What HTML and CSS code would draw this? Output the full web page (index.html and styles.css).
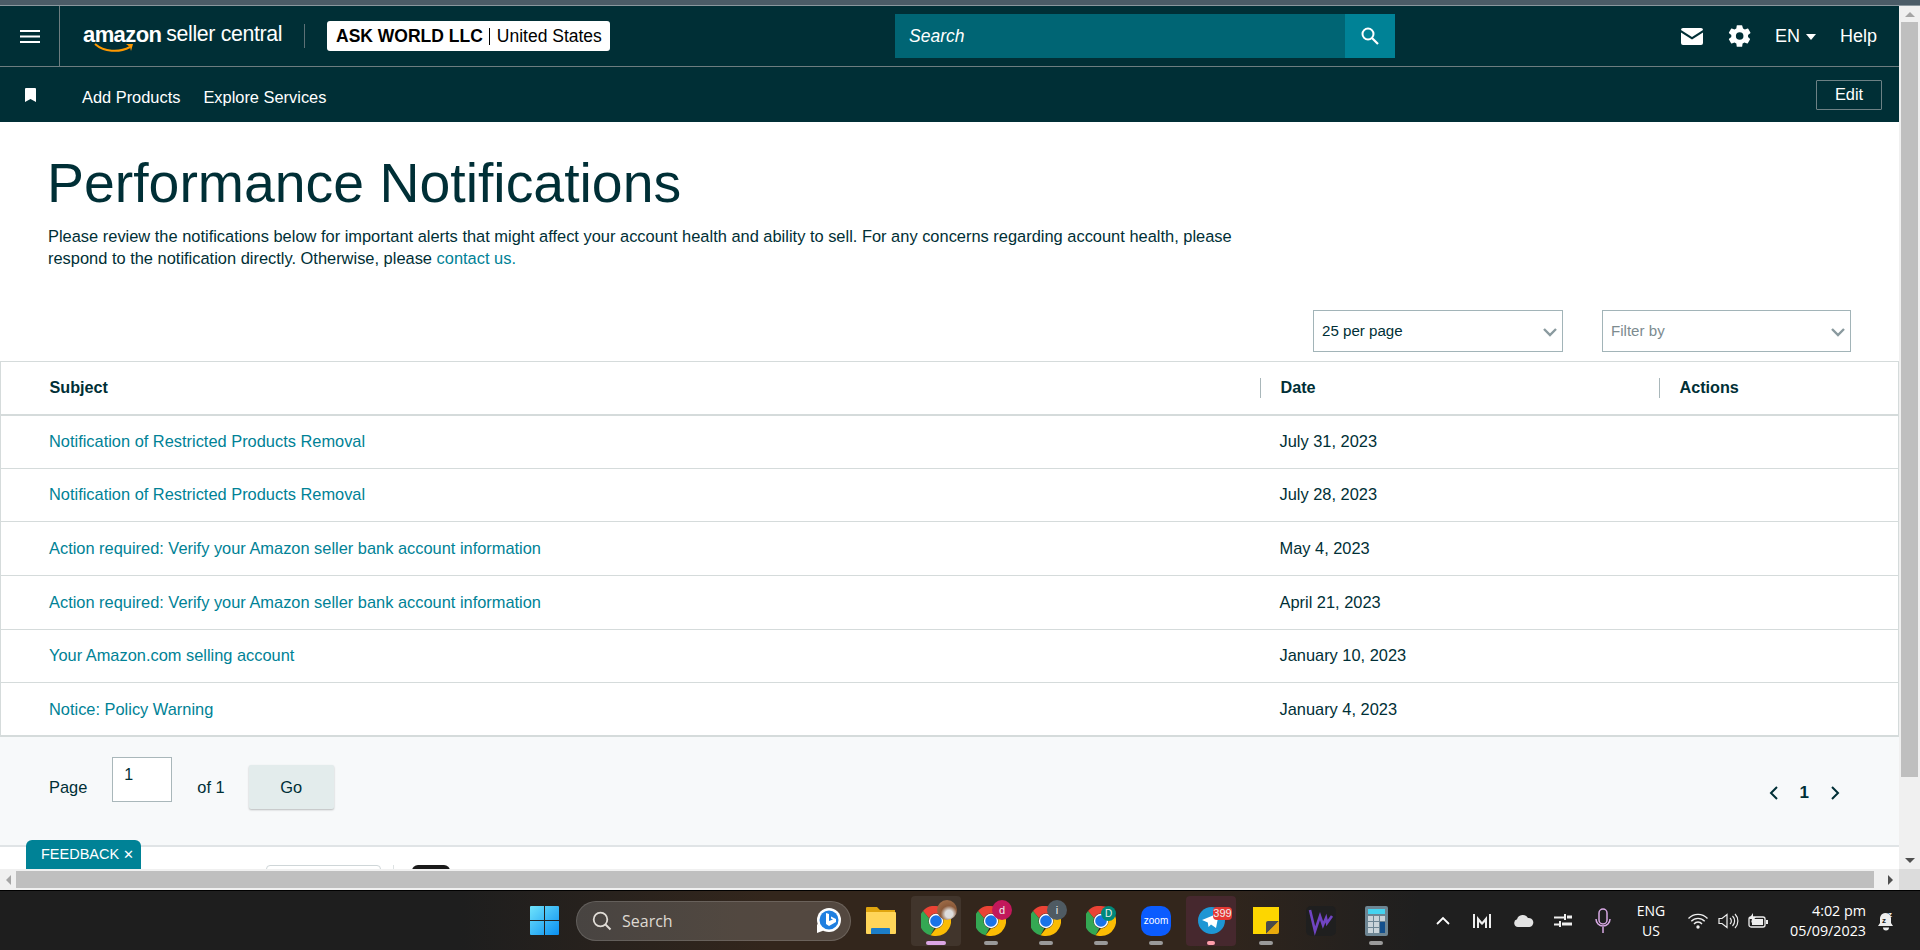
FILE: index.html
```html
<!DOCTYPE html>
<html lang="en">
<head>
<meta charset="utf-8">
<title>Performance Notifications</title>
<link rel="stylesheet" href="styles.css">
</head>
<body>
<svg class="defs" width="0" height="0" aria-hidden="true">
  <symbol id="chrome" viewBox="0 0 30 30">
    <path fill="#ea4335" d="M15 0a15 15 0 0 1 13 7.500H15a7.500 7.500 0 0 0-7 4.800L2 4.900A15 15 0 0 1 15 0z"/>
    <path fill="#34a853" d="M2 4.900l6 7.400a7.500 7.500 0 0 0 5.300 10l-3.700 7A15 15 0 0 1 2 4.900z"/>
    <path fill="#fbbc04" d="M28 7.500A15 15 0 0 1 15 30a15 15 0 0 1-5.400-.7l5.400-6.800a7.500 7.500 0 0 0 6.500-11.200z"/>
    <circle cx="15" cy="15" r="7.200" fill="#fff"/>
    <circle cx="15" cy="15" r="5.800" fill="#1a73e8"/>
  </symbol>
</svg>
<div class="strip"></div>
<div class="window">
  <div class="viewport">
    <div class="page">
      <header class="topbar">
        <button class="menu" aria-label="Menu">
          <svg width="20" height="13" viewBox="0 0 20 13"><path fill="#fff" d="M0 0h20v2H0zM0 5.500h20v2H0zM0 11h20v2H0z"/></svg>
        </button>
        <div class="brand">
          <span class="logo"><b>amazon</b><svg class="smile" width="40" height="11" viewBox="0 0 40 11"><path fill="none" stroke="#f90" stroke-width="2" d="M1 1c9 8 24 9 35 3"/><path fill="#f90" d="M32 1l7 0-2 7-1-4z"/></svg></span>
          <span class="logo-sub">seller central</span>
        </div>
        <span class="brand-sep"></span>
        <div class="account"><b>ASK WORLD LLC</b><i></i><span>United States</span></div>
        <div class="search">
          <span class="search-input">Search</span>
          <span class="search-btn"><svg width="20" height="20" viewBox="0 0 20 20"><circle cx="8" cy="8" r="5.500" fill="none" stroke="#fff" stroke-width="2"/><path stroke="#fff" stroke-width="2.200" d="M12 12l6 6"/></svg></span>
        </div>
        <div class="tools">
          <svg class="mail" width="22" height="17" viewBox="0 0 22 17"><path fill="#fff" d="M2 0h18a2 2 0 0 1 2 2L11 9 0 2a2 2 0 0 1 2-2zM0 4.500l11 7 11-7V15a2 2 0 0 1-2 2H2a2 2 0 0 1-2-2z"/></svg>
          <svg class="gear" width="26" height="26" viewBox="0 0 24 24"><path fill="#fff" d="M19.400 13a7.500 7.500 0 0 0 0-2l2.100-1.600a.5.500 0 0 0 .1-.6l-2-3.500a.5.500 0 0 0-.6-.2l-2.500 1a7.300 7.300 0 0 0-1.700-1L14 2.400a.5.500 0 0 0-.5-.4h-4a.5.500 0 0 0-.5.400l-.4 2.700a7.300 7.300 0 0 0-1.700 1l-2.500-1a.5.500 0 0 0-.6.2l-2 3.500a.5.500 0 0 0 .1.600L4 11a7.500 7.500 0 0 0 0 2l-2.100 1.600a.5.500 0 0 0-.1.600l2 3.500c.1.200.4.300.6.200l2.500-1c.5.400 1.100.7 1.700 1l.4 2.700c0 .2.200.4.500.4h4c.3 0 .5-.2.500-.4l.4-2.700c.6-.3 1.200-.6 1.700-1l2.500 1c.2.100.5 0 .6-.2l2-3.500a.5.500 0 0 0-.1-.6zM11.700 15.500a3.500 3.500 0 1 1 0-7 3.500 3.500 0 0 1 0 7z"/></svg>
          <span class="lang">EN<i class="caret"></i></span>
          <span class="help">Help</span>
        </div>
      </header>
      <nav class="navbar">
        <svg class="bookmark" width="11" height="14" viewBox="0 0 11 14"><path fill="#fff" d="M1 0h9a1 1 0 0 1 1 1v13l-5.500-3L0 14V1a1 1 0 0 1 1-1z"/></svg>
        <a class="nav-link">Add Products</a>
        <a class="nav-link">Explore Services</a>
        <button class="edit">Edit</button>
      </nav>
      <main class="main">
        <h1 class="title">Performance Notifications</h1>
        <p class="intro">Please review the notifications below for important alerts that might affect your account health and ability to sell. For any concerns regarding account health, please respond to the notification directly. Otherwise, please <a>contact us.</a></p>
        <div class="filters">
          <div class="select"><span>25 per page</span><svg width="14" height="9" viewBox="0 0 14 9"><path fill="none" stroke="#8a9a9f" stroke-width="2.400" d="M1 1l6 6 6-6"/></svg></div>
          <div class="select placeholder"><span>Filter by</span><svg width="14" height="9" viewBox="0 0 14 9"><path fill="none" stroke="#8a9a9f" stroke-width="2.400" d="M1 1l6 6 6-6"/></svg></div>
        </div>
        <table class="table">
          <thead>
            <tr><th class="col-subject">Subject</th><th class="col-date"><span class="th-sep"></span>Date</th><th class="col-actions"><span class="th-sep"></span>Actions</th></tr>
          </thead>
          <tbody>
            <tr><td><a>Notification of Restricted Products Removal</a></td><td>July 31, 2023</td><td></td></tr>
            <tr><td><a>Notification of Restricted Products Removal</a></td><td>July 28, 2023</td><td></td></tr>
            <tr><td><a>Action required: Verify your Amazon seller bank account information</a></td><td>May 4, 2023</td><td></td></tr>
            <tr><td><a>Action required: Verify your Amazon seller bank account information</a></td><td>April 21, 2023</td><td></td></tr>
            <tr><td><a>Your Amazon.com selling account</a></td><td>January 10, 2023</td><td></td></tr>
            <tr><td><a>Notice: Policy Warning</a></td><td>January 4, 2023</td><td></td></tr>
          </tbody>
        </table>
        <div class="pager">
          <span class="pager-label">Page</span>
          <span class="pager-input">1</span>
          <span class="pager-of">of 1</span>
          <button class="go">Go</button>
          <div class="pager-nav">
            <svg width="10" height="14" viewBox="0 0 10 14"><path fill="none" stroke="#002f36" stroke-width="2" d="M8 1L2 7l6 6"/></svg>
            <b>1</b>
            <svg width="10" height="14" viewBox="0 0 10 14"><path fill="none" stroke="#002f36" stroke-width="2" d="M2 1l6 6-6 6"/></svg>
          </div>
        </div>
        <div class="peek">
          <span class="peek-box"></span>
          <span class="peek-sep"></span>
          <span class="peek-dark"></span>
        </div>
      </main>
    </div>
    <div class="vscroll">
      <span class="arrow up"></span>
      <div class="vtrack"><span class="vthumb"></span></div>
      <span class="arrow down"></span>
    </div>
    <div class="feedback">FEEDBACK <span class="fb-x">✕</span></div>
  </div>
  <div class="hscroll">
    <span class="arrow left"></span>
    <div class="htrack"><span class="hthumb"></span></div>
    <span class="arrow right"></span>
    <span class="corner"></span>
  </div>
</div>
<footer class="taskbar">
  <div class="apps">
    <svg class="win" width="29" height="29" viewBox="0 0 29 29"><defs><linearGradient id="wg" x1="0" y1="0" x2="1" y2="1"><stop offset="0" stop-color="#6fe3fb"/><stop offset="1" stop-color="#0a8ff0"/></linearGradient></defs><path fill="url(#wg)" d="M1 0h13v14H0V1a1 1 0 0 1 1-1zM15 0h13a1 1 0 0 1 1 1v13H15zM0 15h14v14H1a1 1 0 0 1-1-1zM15 15h14v13a1 1 0 0 1-1 1H15z"/></svg>
    <div class="tb-search">
      <svg width="20" height="20" viewBox="0 0 20 20"><circle cx="8.500" cy="8.500" r="6.800" fill="none" stroke="#e0dcd6" stroke-width="1.800"/><path stroke="#e0dcd6" stroke-width="2" d="M13.500 13.500l5 5"/></svg>
      <span>Search</span>
      <svg class="bing" width="26" height="26" viewBox="0 0 26 26"><circle cx="13" cy="12" r="12" fill="#fff"/><path fill="#fff" d="M1 16v9l8-3z"/><circle cx="13" cy="12" r="9.500" fill="#1f7fe0"/><path fill="#fff" d="M10 5l3 1v7l4-1.500-2-1 0-2 5 2.500v3l-7 4-3-2z"/></svg>
    </div>
    <span class="app folder">
      <svg width="30" height="27" viewBox="0 0 30 27"><path fill="#e0a50f" d="M1 0h10l3 3h15v8H0V1a1 1 0 0 1 1-1z"/><path fill="#ffd559" d="M0 5h29a1 1 0 0 1 1 1v20a1 1 0 0 1-1 1H1a1 1 0 0 1-1-1z"/><path fill="#1c7ec9" d="M6 21h17a1 1 0 0 1 1 1v5H5v-5a1 1 0 0 1 1-1z"/></svg>
    </span>
    <span class="app active">
      <svg width="30" height="30"><use href="#chrome"/></svg>
      <span class="badge photo"></span>
      <i class="dot pink"></i>
    </span>
    <span class="app">
      <svg width="30" height="30"><use href="#chrome"/></svg>
      <span class="badge mag">d</span>
      <i class="dot"></i>
    </span>
    <span class="app">
      <svg width="30" height="30"><use href="#chrome"/></svg>
      <span class="badge slate">i</span>
      <i class="dot"></i>
    </span>
    <span class="app">
      <svg width="30" height="30"><use href="#chrome"/></svg>
      <span class="badge teal">D</span>
      <i class="dot"></i>
    </span>
    <span class="app">
      <span class="zoom-ic">zoom</span>
      <i class="dot"></i>
    </span>
    <span class="app tg">
      <svg width="27" height="27" viewBox="0 0 27 27"><circle cx="13.500" cy="13.500" r="13.500" fill="#1e96d4"/><path fill="#fff" d="M4 13l17-7-3 15-5-3.500-2.500 2.500-.7-4.500z"/></svg>
      <span class="badge count">399</span>
      <i class="dot rose"></i>
    </span>
    <span class="app">
      <svg width="26" height="27" viewBox="0 0 26 27"><path fill="#fdd600" d="M0 0h26v16L16 27H0z"/><path fill="#4a4a4a" d="M13 27V16a2 2 0 0 1 2-2h11z"/><path fill="#e8a90c" d="M13 27L26 14v11a2 2 0 0 1-2 2z"/></svg>
      <i class="dot"></i>
    </span>
    <span class="app">
      <svg width="30" height="30" viewBox="0 0 30 30"><rect width="30" height="30" rx="5" fill="#1f1f1f"/><path fill="none" stroke="#7044c2" stroke-width="2.600" d="M4 4l5 21 5-15 3 9 3-7 1 5 5-7"/></svg>
    </span>
    <span class="app">
      <svg width="23" height="30" viewBox="0 0 23 30"><rect width="23" height="30" rx="2" fill="#6d8593"/><rect x="3" y="3" width="17" height="5" fill="#45d3f0"/><path fill="#c9d3d9" d="M3 10h5v5H3zM9 10h5v5H9zM15 10h5v5h-5zM3 16h5v5H3zM9 16h5v5H9zM3 22h5v5H3zM9 22h5v5H9z"/><rect x="15" y="16" width="5" height="11" fill="#14508c"/></svg>
      <i class="dot"></i>
    </span>
  </div>
  <div class="tray">
    <svg class="chev" width="14" height="9" viewBox="0 0 14 9"><path fill="none" stroke="#fff" stroke-width="1.800" d="M1 8l6-6 6 6"/></svg>
    <svg class="t-m" width="18" height="14" viewBox="0 0 18 14"><path fill="#eee" d="M0 0h2v14H0zM16 0h2v14h-2zM4 2l5 6 5-6v12h-2V8L9 11 6 8v6H4z"/></svg>
    <svg class="t-cloud" width="21" height="13" viewBox="0 0 21 13"><path fill="#e3e3e3" d="M5 13a4 4 0 0 1-1-7.800A6 6 0 0 1 15 4a4.500 4.500 0 0 1 1.500 9z"/></svg>
    <svg class="t-sliders" width="18" height="14" viewBox="0 0 18 14"><path fill="#eee" d="M0 2.500h10v2H0zM13 1.500h5v3h-5zM0 9.500h5v2H0zM8 8.500h10v3H8zM10 0h2v6h-2zM5 7h2v6H5z"/></svg>
    <svg class="t-mic" width="16" height="26" viewBox="0 0 16 26"><rect x="4" y="1" width="8" height="15" rx="4" fill="none" stroke="#d8a9e4" stroke-width="1.500"/><path fill="none" stroke="#d8a9e4" stroke-width="1.500" d="M1 11a7 7 0 0 0 14 0M8 19v6"/></svg>
    <span class="t-lang">ENG<br>US</span>
    <svg class="t-wifi" width="20" height="16" viewBox="0 0 20 16"><path fill="none" stroke="#eee" stroke-width="1.300" d="M.5 5.500a13 13 0 0 1 19 0M3.300 8.300a9 9 0 0 1 13.400 0M6 11a5 5 0 0 1 8 0"/><circle cx="10" cy="14" r="1.700" fill="#eee"/></svg>
    <svg class="t-vol" width="21" height="16" viewBox="0 0 21 16"><path fill="none" stroke="#eee" stroke-width="1.200" d="M1 5.500h3L9 1.500v13l-5-4H1zM12 5a4 4 0 0 1 0 6M14.500 3a7 7 0 0 1 0 10M17 1a10 10 0 0 1 0 14"/></svg>
    <svg class="t-bat" width="20" height="16" viewBox="0 0 20 16"><rect x="1" y="4" width="16" height="10" rx="2" fill="none" stroke="#eee" stroke-width="1.300"/><rect x="4" y="6" width="11" height="6" fill="#eee"/><rect x="18" y="7" width="2" height="4" fill="#eee"/><path fill="#eee" d="M5 0L1 6h3l-1 4 5-6H5z"/></svg>
    <span class="t-clock">4:02 pm<br>05/09/2023</span>
    <svg class="t-bell" width="18" height="20" viewBox="0 0 18 20"><path fill="#eee" d="M8 2a6 6 0 0 1 6 5v5l2 3H1l2-3V7a6 6 0 0 1 5-5zM6 16.500h6a3 3 0 0 1-6 0z"/><text class="zz" x="5" y="12">z</text><text class="zzb" x="11" y="6">z</text></svg>
  </div>
</footer>
</body>
</html>
```
FILE: styles.css
```css
* { box-sizing: border-box; }
html, body { margin: 0; height: 100%; }
body {
  width: 1920px;
  height: 950px;
  overflow: hidden;
  display: flex;
  flex-direction: column;
  font-family: "Liberation Sans", Arial, sans-serif;
  color: #002f36;
  background: #fff;
}
.defs { position: absolute; }
.strip { height: 6px; flex: none; background: #4b5c67; border-bottom: 1px solid #8a979e; }

.window { flex: none; height: 884px; display: flex; flex-direction: column; }
.viewport { position: relative; flex: none; height: 863px; display: flex; overflow: hidden; }
.page { flex: 1; min-width: 0; display: flex; flex-direction: column; overflow: hidden; }

.topbar {
  flex: none;
  height: 61px;
  display: flex;
  align-items: center;
  background: #002f36;
  border-bottom: 1px solid #6d7d80;
  color: #fff;
}
.menu {
  width: 60px;
  height: 60px;
  padding: 0;
  flex: none;
  display: flex;
  align-items: center;
  justify-content: center;
  background: none;
  border: 0;
  border-right: 1px solid #6d7d80;
}
.brand { display: flex; align-items: flex-start; margin-left: 23px; width: 221px; height: 36px; gap: 5px; }
.logo { position: relative; display: block; height: 36px; }
.logo b { font-size: 22px; line-height: 34px; letter-spacing: -.6px; }
.smile { position: absolute; left: 11px; top: 25px; }
.logo-sub { font-size: 21.300px; line-height: 33px; letter-spacing: -.35px; }
.brand-sep { width: 1px; height: 24px; background: #5d7176; }
.account {
  width: 283px;
  height: 30px;
  margin-left: 22px;
  padding-left: 9px;
  display: flex;
  align-items: center;
  font-size: 17.500px;
  color: #000;
  background: #fff;
  border-radius: 3px;
}
.account b { font-size: 17.500px; }
.account i { width: 1px; height: 17px; margin: 0 7px 0 6px; background: #000; }
.search { width: 500px; height: 44px; margin-left: 285px; display: flex; flex: none; }
.search-input {
  flex: 1;
  padding-left: 14px;
  font-size: 17.500px;
  font-style: italic;
  line-height: 44px;
  background: #006574;
}
.search-btn { width: 50px; display: flex; align-items: center; justify-content: center; background: #008296; }
.tools { margin-left: 286px; display: flex; align-items: center; font-size: 18px; }
.gear { margin-left: 24px; }
.lang { margin-left: 22px; display: flex; align-items: center; }
.caret { width: 0; height: 0; margin-left: 6px; margin-top: 2px; border: 5px solid transparent; border-top: 6px solid #fff; border-bottom: 0; }
.help { margin-left: 24px; }

.navbar {
  flex: none;
  height: 55px;
  display: flex;
  align-items: center;
  padding: 5px 0 0 25px;
  background: #002f36;
  color: #fff;
  font-size: 16.400px;
}
.bookmark { margin-top: -5px; margin-right: 46px; }
.nav-link { margin-right: 23px; }
.edit {
  margin: -5px 17px 0 auto;
  width: 66px;
  height: 30px;
  padding: 0;
  font: inherit;
  color: #fff;
  background: none;
  border: 1px solid #6d8185;
  border-radius: 1px;
}

.main { flex: 1; display: flex; flex-direction: column; min-height: 0; }
.title {
  margin: 24px 0 0 47px;
  font-size: 55.400px;
  font-weight: 400;
  line-height: 74px;
  color: #002f36;
}
.intro {
  width: 1200px;
  margin: 5px 0 0 48px;
  font-size: 16.430px;
  line-height: 22px;
}
.intro a, .table a { color: #008296; }
.filters { display: flex; justify-content: flex-end; gap: 39px; margin: 41px 48px 0 0; }
.select {
  width: 250px;
  height: 42px;
  padding: 0 5px 0 8px;
  display: flex;
  align-items: center;
  justify-content: space-between;
  font-size: 15.100px;
  border: 1px solid #a2b4b8;
  background: #fff;
}
.select span { margin-top: -2px; }
.select svg { margin-top: 3px; }
.placeholder { width: 249px; color: #7d8c90; }

.table {
  width: 1899px;
  margin-top: 9px;
  flex: none;
  table-layout: fixed;
  border-collapse: collapse;
  border: 1px solid #d5dbdb;
  border-width: 1px 1px 2px;
  font-size: 16.400px;
}
.table th { position: relative; height: 53px; padding: 0 0 0 21px; text-align: left; font-size: 16.200px; font-weight: 700; border-bottom: 2px solid #d5dbdb; }
.table td { height: 53.670px; padding: 0 0 0 20px; border-bottom: 1px solid #d5dbdb; }
.table td:first-child { padding-left: 48px; }
.table th.col-subject { width: 1259px; padding-left: 48.500px; }
.table th.col-date { width: 399px; }
.th-sep { position: absolute; left: 0; top: 16px; width: 1px; height: 20px; background: #a9b7ba; }

.pager {
  flex: none;
  height: 110px;
  display: flex;
  align-items: flex-start;
  padding-left: 49px;
  font-size: 16.400px;
  background: #f7f9fa;
  border-bottom: 2px solid #e0e4e6;
}
.pager-label { margin-top: 41px; }
.pager-input {
  width: 60px;
  height: 45px;
  margin: 20px 0 0 25px;
  padding: 8px 0 0 11px;
  background: #fff;
  border: 1px solid #a9b7ba;
  font-size: 16px;
}
.pager-of { margin: 41px 0 0 25px; }
.go {
  width: 85px;
  height: 44px;
  margin: 28px 0 0 24px;
  padding: 0;
  font: inherit;
  color: #002f36;
  background: #e3ecec;
  border: 0;
  border-radius: 2px;
  box-shadow: 0 1px 2px rgba(0, 0, 0, .25);
}
.pager-nav { align-self: center; margin: 4px 59px 0 auto; display: flex; align-items: center; gap: 21px; font-size: 17px; }
.peek { flex: 1; display: flex; align-items: flex-start; padding: 18px 0 0 266px; background: #fff; }
.peek-box { width: 115px; height: 20px; border: 1px solid #cfd6d8; border-radius: 4px; }
.peek-sep { width: 1px; height: 20px; margin-left: 12px; background: #dde2e3; }
.peek-dark { width: 38px; height: 20px; margin-left: 18px; background: #1a1a1a; border-radius: 6px 6px 0 0; }

.vscroll { flex: none; width: 21px; display: flex; flex-direction: column; align-items: center; background: #f0f0f0; }
.vtrack { flex: 1; width: 100%; padding: 0 2px; }
.vthumb { display: block; height: 755px; background: #bfbfbf; }
.arrow { flex: none; width: 0; height: 0; border: 5px solid transparent; }
.up { margin: 6px 0 5px; border-top: 0; border-bottom: 5px solid #a5a5a5; }
.down { margin: 5px 0 6px; border-bottom: 0; border-top: 5px solid #505050; }
.feedback {
  position: absolute;
  left: 26px;
  bottom: -6px;
  width: 115px;
  height: 35px;
  padding: 6px 0 0 15px;
  font-size: 14.500px;
  color: #fff;
  background: #008296;
  border-radius: 6px 6px 0 0;
}
.fb-x { font-size: 13px; }

.hscroll { flex: none; height: 21px; display: flex; align-items: center; padding-left: 6px; background: #f0f0f0; }
.left { margin-right: 5px; border-left: 0; border-right: 5px solid #a5a5a5; }
.htrack { width: 1858px; height: 17px; }
.hthumb { display: block; height: 100%; background: #bfbfbf; }
.right { margin-left: 14px; border-right: 0; border-left: 5px solid #505050; }
.corner { width: 21px; height: 21px; margin-left: auto; background: #dcdcdc; }

.taskbar {
  flex: none;
  height: 60px;
  display: flex;
  align-items: center;
  background: linear-gradient(90deg, #1e1e1e 0 24%, #33261c 40%, #33261c 62%, #1f1f1f 74%);
  border-top: 1px solid #000;
  color: #fff;
}
.apps { display: flex; align-items: center; margin-left: 530px; width: 903px; height: 100%; }
.tb-search {
  width: 275px;
  height: 40px;
  margin-left: 17px;
  padding: 0 12px 0 15px;
  display: flex;
  align-items: center;
  gap: 10px;
  font-family: "Open Sans", sans-serif;
  font-size: 16px;
  color: #ded9d2;
  background: rgba(255, 255, 255, .16);
  border: 1px solid rgba(255, 255, 255, .14);
  border-radius: 20px;
}
.bing { margin-left: auto; margin-right: -4px; }
.app {
  position: relative;
  width: 50px;
  height: 50px;
  margin-left: 5px;
  flex: none;
  display: flex;
  align-items: center;
  justify-content: center;
  border-radius: 4px;
}
.folder { margin-left: 0; width: 60px; }
.active { margin-left: 0; background: rgba(255, 255, 255, .07); }
.tg { background: #46282e; }
.dot { position: absolute; left: 18px; bottom: 1px; width: 14px; height: 4px; border-radius: 2px; background: #9a9a9a; }
.pink { left: 15px; width: 20px; background: #dba6e4; }
.rose { left: 21px; width: 8px; background: #ff9eab; }
.badge {
  position: absolute;
  display: flex;
  align-items: center;
  justify-content: center;
  border-radius: 50%;
  font-family: "Liberation Sans", sans-serif;
  color: #eee;
}
.photo, .mag, .slate { left: 26px; top: 4px; width: 20px; height: 20px; font-size: 11px; }
.photo { background: radial-gradient(circle at 60% 70%, #ddd 0 20%, #8b5a3a 45%, #a9764f 100%); }
.mag { background: #c2185b; }
.slate { background: #4f5b63; }
.teal { left: 25px; top: 10px; width: 15px; height: 15px; font-size: 10px; background: #00897b; }
.count { left: 27px; top: 11px; width: 19px; height: 13px; font-size: 11px; border-radius: 4px; background: #e53935; }
.zoom-ic {
  width: 30px;
  height: 30px;
  display: flex;
  align-items: center;
  justify-content: center;
  font-size: 10px;
  background: #0b5cff;
  border-radius: 10px;
}
.tray { display: flex; align-items: center; height: 100%; flex: 1; }
.chev { margin-left: 3px; }
.t-m { margin-left: 23px; }
.t-cloud { margin-left: 22px; }
.t-sliders { margin-left: 20px; }
.t-mic { margin-left: 23px; }
.t-lang { width: 40px; margin-left: 20px; text-align: center; font-family: "Open Sans", sans-serif; font-size: 14px; line-height: 20px; }
.t-wifi { margin-left: 17px; }
.t-vol { margin-left: 10px; }
.t-bat { margin-left: 9px; }
.t-clock { width: 90px; margin-left: 8px; text-align: right; font-family: "Open Sans", sans-serif; font-size: 14.300px; line-height: 20px; white-space: nowrap; }
.t-bell { margin-left: 11px; }
.zz, .zzb { font-family: "Liberation Sans", sans-serif; font-weight: 700; }
.zz { font-size: 8px; fill: #222; }
.zzb { font-size: 8px; fill: #eee; }
```
